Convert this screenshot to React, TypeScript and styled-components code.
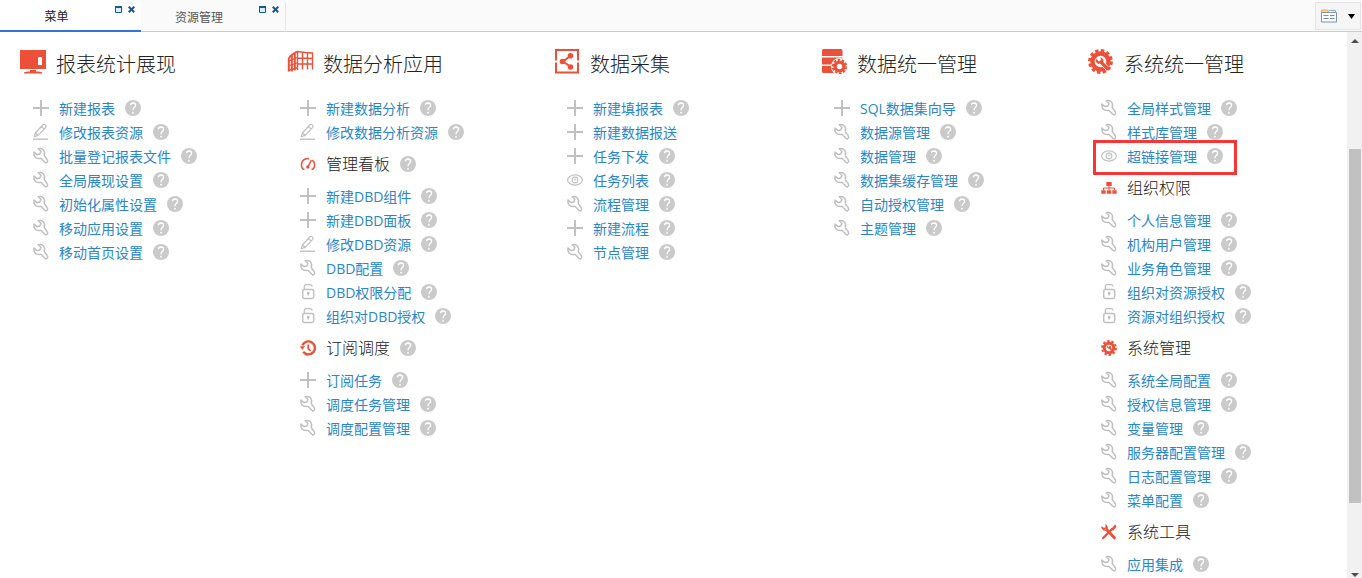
import React from 'react';
import styled, { createGlobalStyle } from 'styled-components';

const RED = '#ed5038';
const BLUE = '#2a86c8';
const GRAY = '#c0c0c0';

const GlobalStyle = createGlobalStyle`
  * { box-sizing: border-box; }
  body {
    margin: 0;
    background: #fff;
    color: #222;
    font-family: 'Open Sans', 'Noto Sans CJK SC', sans-serif;
  }
  button {
    margin: 0;
    padding: 0;
    border: 0;
    background: none;
    color: inherit;
    font: inherit;
    cursor: pointer;
  }
  svg { display: block; flex: none; }
`;

const Page = styled.div`
  display: flex;
  flex-direction: column;
  height: 100vh;
  overflow: hidden;
`;

const TabBar = styled.header`
  display: flex;
  flex: none;
  height: 32px;
  background: #fafafa;
  border-bottom: 1px solid #ccc;
`;

const Tab = styled.div<{ $active?: boolean }>`
  display: flex;
  width: ${(p) => (p.$active ? 141 : 145)}px;
  height: 32px;
  padding-right: 5px;
  border-right: ${(p) => (p.$active ? 0 : 1)}px solid #e6e6e6;
  border-bottom: ${(p) => (p.$active ? '2px solid #2f74d8' : '1px solid #ccc')};
  border-radius: 0 5px 0 0;
  background: ${(p) => (p.$active ? '#fff' : 'transparent')};
  color: ${(p) => (p.$active ? '#222' : '#555')};
`;

const TabLabel = styled.button`
  flex: 1;
  padding: 4px 2px 0 0;
  font-size: 12px;
  line-height: 26px;
`;

const TabControls = styled.div`
  display: flex;
  gap: 6px;
  padding-top: 6px;
  align-items: flex-start;
`;

const ViewButton = styled.button`
  display: flex;
  align-items: center;
  justify-content: space-between;
  width: 46px;
  height: 28px;
  margin: 2px 1px 0 auto;
  padding: 0 5px;
  border: 1px solid #e4e4e4;
  background: #f5f5f5;
`;

const Body = styled.div`
  display: flex;
  flex: 1;
  min-height: 0;
`;

const Columns = styled.main`
  display: grid;
  grid-template-columns: repeat(5, 1fr);
  flex: 1;
  padding-right: 12px;
  overflow: hidden;
`;

const Column = styled.section`
  padding-left: 20px;
  white-space: nowrap;
`;

const Title = styled.h2`
  display: flex;
  align-items: center;
  gap: 9px;
  height: 64px;
  margin: 0;
  padding-bottom: 5px;
  font-size: 20px;
  font-weight: 300;
  line-height: 28px;
`;

const TitleText = styled.span`
  padding-top: 6px;
`;

const SubTitle = styled.h3`
  display: flex;
  align-items: center;
  gap: 10px;
  height: 40px;
  margin: 0;
  padding-left: 13px;
  font-size: 16px;
  font-weight: 300;
  line-height: 24px;
`;

const List = styled.ul`
  margin: 0;
  padding: 0 0 0 13px;
  list-style: none;
`;

const Item = styled.li`
  display: flex;
`;

const ItemRow = styled.div`
  position: relative;
  display: flex;
  align-items: center;
  gap: 10px;
  height: 24px;
`;

const ItemLink = styled.a`
  padding-top: 2px;
  color: ${BLUE};
  font-size: 14px;
  line-height: 22px;
  text-decoration: none;
`;

const Callout = styled.span`
  position: absolute;
  inset: -4px -14px -7px -8px;
  border: 3px solid #fa3535;
  pointer-events: none;
`;

const ScrollTrack = styled.div`
  display: flex;
  flex-direction: column;
  flex: none;
  width: 15px;
  padding: 7px 1px 1px 2px;
  background: #f1f1f1;
`;

const ScrollArrow = styled.div<{ $down?: boolean }>`
  flex: none;
  width: 0;
  height: 4px;
  margin: 0 auto;
  border: 4px solid transparent;
  border-top: ${(p) => (p.$down ? '4px solid #505050' : '0')};
  border-bottom: ${(p) => (p.$down ? '0' : '4px solid #505050')};
`;

const ScrollSpace = styled.div<{ $grow: number }>`
  flex: ${(p) => p.$grow} 0 0;
`;

const ScrollThumb = styled.div`
  flex: 353 0 0;
  background: #c1c1c1;
`;

type IconName = 'plus' | 'edit' | 'tool' | 'eye' | 'lock';
type SubIconName = 'gauge' | 'history' | 'org' | 'gear' | 'tools';
type TitleIconName = 'monitor' | 'grid' | 'share' | 'database' | 'system';

const itemIcons: Record<IconName, React.ReactNode> = {
  plus: <path d="M8 0v16M0 8h16" strokeWidth="2" />,
  edit: (
    <>
      <path d="M1.200 12.800 2.400 9 9.600 1Q11-.2 12.300 .9 13.600 2 12.600 3.300L5.200 11.400ZM8.400 2.500l2.600 2.400M2.600 9l2.400 2.300" strokeWidth="1.200" />
      <path d="M0 15.200h15" strokeWidth="1.400" />
    </>
  ),
  tool: (
    <path
      d="M5.200.2C9-1 12.600 2 11.300 6.200Q11.100 6.900 11.600 7.400L14.200 11C15.600 13 13.400 15.200 11.800 13.700L8.200 10Q7.500 9.600 6.700 9.800C3 10.300.2 7.400 1 3.500L3.900 6 6.900 5.400 7.900 2.600Z"
      transform="translate(0 .6)"
      strokeWidth="1.500"
    />
  ),
  eye: (
    <>
      <ellipse cx="8" cy="8" rx="7.400" ry="5.100" strokeWidth="1.200" />
      <circle cx="8" cy="8" r="2.900" strokeWidth="1.100" />
      <circle cx="8" cy="7.600" r=".7" strokeWidth=".8" />
    </>
  ),
  lock: (
    <>
      <rect x="2.700" y="5.600" width="11" height="8.800" rx="1.600" strokeWidth="1.500" />
      <path d="M4.300 5.400V2.800Q4.300.6 6.500.6H9.600Q12 .6 12 2.600M8.200 9v2.600" />
      <circle cx="8.200" cy="9.300" r=".8" />
    </>
  ),
};

const ItemIcon = ({ name }: { name: IconName }) => (
  <svg width="16" height="16" viewBox="0 0 16 16" fill="none" stroke={GRAY} strokeWidth="1.300" strokeLinejoin="round" overflow="visible" aria-hidden="true">
    {itemIcons[name]}
  </svg>
);

const subIcons: Record<SubIconName, React.ReactNode> = {
  gauge: (
    <g fill="none" stroke={RED} strokeWidth="1.500">
      <path d="M4.500 13.200H3.300Q1.400 11.600 1.400 9 1.600 4.600 5.400 3 7.200 2.300 9 2.700M12.200 4.200Q14.800 6.200 14.700 9 14.600 11.700 12.800 13.200H11.500" />
      <path d="M11.300 4.200 8 11" />
      <circle cx="7.800" cy="11" r=".9" />
    </g>
  ),
  history: (
    <>
      <path d="M3.200 11.800A6.500 6.500 0 1 0 2.400 5.400M5.600 14.200l2.400.4" fill="none" stroke={RED} strokeWidth="2.400" />
      <path d="M0 6.200H5L2.200 10Z" fill={RED} />
      <path d="M8.200 4.500V8.600L10.600 10.800" fill="none" stroke={RED} strokeWidth="1.700" />
    </>
  ),
  org: (
    <g fill={RED}>
      <path d="M5.300 2h5.400v4H5.300ZM.3 10.200h4.400v3.600H.3ZM5.800 10.200h4.400v3.600H5.800ZM11.300 10.200h4.400v3.600h-4.400Z" />
      <path d="M8 6v4M2.500 10V8h11v2" fill="none" stroke={RED} />
    </g>
  ),
  gear: (
    <>
      <circle cx="8" cy="8" r="6.900" fill="none" stroke={RED} strokeWidth="2" strokeDasharray="2.400 1.940" />
      <circle cx="8" cy="8" r="4.700" fill="none" stroke={RED} strokeWidth="3" />
      <path d="M7.800 6.600 12 12" stroke={RED} strokeWidth="1.800" />
      <path d="M6 6.400 8 8.400M9 6.200l.8 2" stroke={RED} strokeWidth="1.200" />
    </>
  ),
  tools: (
    <g fill="none" stroke={RED} strokeLinecap="round">
      <path d="M2.200 14 11 5" strokeWidth="2.400" />
      <path d="M11 5.200 14 1.800 14.600 2.600 12 5.800Z" strokeWidth="1.500" />
      <path d="M6 6 13.400 13.800" strokeWidth="3" />
      <path d="M1.200 3.600Q2.200 6.800 5.400 6 7.200 4.400 5.200 1.600L5 4 3.200 4.600Z" strokeWidth="1.400" />
    </g>
  ),
};

const SubIcon = ({ name }: { name: SubIconName }) => (
  <svg width="16" height="16" viewBox="0 0 16 16" aria-hidden="true">
    {subIcons[name]}
  </svg>
);

const titleIcons: Record<TitleIconName, React.ReactNode> = {
  monitor: (
    <g fill={RED}>
      <path d="M0 1H26V20H0ZM18 8V16H22V8Z" fillRule="evenodd" />
      <path d="M10 21h6v1.500h2q4 0 4 1.500v.5H4V24Q4 22.500 8 22.500h2Z" />
    </g>
  ),
  grid: (
    <g fill="none" stroke={RED}>
      <path d="M10 2.500 18.500 3.500 25.500 4V20.500M10.500 2V21M15.500 3V20.500M20.500 3.500V20.500M10.500 9 26 9.500M10.500 15H26" strokeWidth="1.400" />
      <path d="M1.800 22.500V10Q2 7.500 4.500 6L10 2.500M4.800 22.500V6.500M7.800 21.500V4.500" strokeWidth="2" />
      <path d="M1 12.500 10 8.500M1 17 10 14M1 21.500 10 19" strokeWidth="1.300" />
    </g>
  ),
  share: (
    <g fill={RED}>
      <path d="M2 11.500V1H24V11.500M2 13.500V23.500H24V13.500" fill="none" stroke={RED} strokeWidth="2" />
      <path d="M17 6.500 9 12.500 17 18" fill="none" stroke={RED} strokeWidth="2" />
      <circle cx="16.500" cy="6.800" r="2.800" />
      <circle cx="8.500" cy="12.500" r="2.800" />
      <circle cx="16.500" cy="18" r="2.800" />
    </g>
  ),
  database: (
    <>
      <path d="M1 1.500Q1 0 2.500 0H20Q21.500 0 21.500 1.500V7H1ZM1 8.500H21.500V15.500H1ZM1 17H21.500V24H2.500Q1 24 1 22.500Z" fill={RED} />
      <circle cx="18.500" cy="17.500" r="8.500" fill="#fff" />
      <circle cx="18.500" cy="17.500" r="6.700" fill="none" stroke={RED} strokeWidth="2" strokeDasharray="2.600 1.610" />
      <circle cx="18.500" cy="17.500" r="4.400" fill="none" stroke={RED} strokeWidth="3.400" />
    </>
  ),
  system: (
    <>
      <circle cx="12.500" cy="12.500" r="11" fill="none" stroke={RED} strokeWidth="2.800" strokeDasharray="3.400 2.360" />
      <circle cx="12.500" cy="12.500" r="8" fill="none" stroke={RED} strokeWidth="4.400" />
      <path d="M12 12 20 20.500" stroke={RED} strokeWidth="3.400" />
      <path d="M8 9.500Q7 13.500 10.500 15 15.500 15.500 15.500 10.500L12.500 8 13 11.500 11 12.500Z" fill={RED} />
      <path d="M11.500 14.500 18 21M15.500 12 20 17.500" stroke="#fff" strokeWidth=".8" />
    </>
  ),
};

const TitleIcon = ({ name }: { name: TitleIconName }) => (
  <svg width="27" height="25" viewBox="0 0 27 25" aria-hidden="true">
    {titleIcons[name]}
  </svg>
);

const HelpButton = ({ topic }: { topic: string }) => (
  <button type="button" aria-label={`${topic}帮助`}>
    <svg width="16" height="16" viewBox="0 0 16 16" aria-hidden="true">
      <circle cx="8" cy="8" r="8" fill="#cacaca" />
      <path d="M5.400 5.300Q5.600 3 8 3 10.600 3.100 10.600 5.200 10.500 6.600 9.200 7.400 8 8.300 8 10.200" fill="none" stroke="#fff" strokeWidth="1.300" />
      <circle cx="8" cy="12.700" r=".9" fill="#fff" />
    </svg>
  </button>
);

const WindowControls = ({ tab }: { tab: string }) => (
  <TabControls>
    <button type="button" aria-label={`最大化${tab}`}>
      <svg width="7" height="8" viewBox="0 0 7 8" aria-hidden="true">
        <path d="M.5 1v5.500h6V1Z" fill="#d8ecfa" stroke="#155a96" />
        <path d="M0 1h7" stroke="#155a96" strokeWidth="2" />
      </svg>
    </button>
    <button type="button" aria-label={`关闭${tab}`}>
      <svg width="8" height="8" viewBox="0 0 8 8" aria-hidden="true">
        <path d="M.7.7l5.600 5.600M6.300.7.7 6.300" stroke="#155a96" strokeWidth="2" />
      </svg>
    </button>
  </TabControls>
);

interface Entry {
  icon: IconName;
  text: string;
  noHelp?: boolean;
  marked?: boolean;
}

interface Group {
  title?: string;
  icon?: SubIconName;
  help?: boolean;
  entries: Entry[];
}

interface Section {
  title: string;
  icon: TitleIconName;
  groups: Group[];
}

const entry = (icon: IconName, text: string, extra: Partial<Entry> = {}): Entry => ({ icon, text, ...extra });

const sections: Section[] = [
  {
    title: '报表统计展现',
    icon: 'monitor',
    groups: [
      {
        entries: [
          entry('plus', '新建报表'),
          entry('edit', '修改报表资源'),
          entry('tool', '批量登记报表文件'),
          entry('tool', '全局展现设置'),
          entry('tool', '初始化属性设置'),
          entry('tool', '移动应用设置'),
          entry('tool', '移动首页设置'),
        ],
      },
    ],
  },
  {
    title: '数据分析应用',
    icon: 'grid',
    groups: [
      { entries: [entry('plus', '新建数据分析'), entry('edit', '修改数据分析资源')] },
      {
        title: '管理看板',
        icon: 'gauge',
        help: true,
        entries: [
          entry('plus', '新建DBD组件'),
          entry('plus', '新建DBD面板'),
          entry('edit', '修改DBD资源'),
          entry('tool', 'DBD配置'),
          entry('lock', 'DBD权限分配'),
          entry('lock', '组织对DBD授权'),
        ],
      },
      {
        title: '订阅调度',
        icon: 'history',
        help: true,
        entries: [entry('plus', '订阅任务'), entry('tool', '调度任务管理'), entry('tool', '调度配置管理')],
      },
    ],
  },
  {
    title: '数据采集',
    icon: 'share',
    groups: [
      {
        entries: [
          entry('plus', '新建填报表'),
          entry('plus', '新建数据报送', { noHelp: true }),
          entry('plus', '任务下发'),
          entry('eye', '任务列表'),
          entry('tool', '流程管理'),
          entry('plus', '新建流程'),
          entry('tool', '节点管理'),
        ],
      },
    ],
  },
  {
    title: '数据统一管理',
    icon: 'database',
    groups: [
      {
        entries: [
          entry('plus', 'SQL数据集向导'),
          entry('tool', '数据源管理'),
          entry('tool', '数据管理'),
          entry('tool', '数据集缓存管理'),
          entry('tool', '自动授权管理'),
          entry('tool', '主题管理'),
        ],
      },
    ],
  },
  {
    title: '系统统一管理',
    icon: 'system',
    groups: [
      {
        entries: [
          entry('tool', '全局样式管理'),
          entry('tool', '样式库管理'),
          entry('eye', '超链接管理', { marked: true }),
        ],
      },
      {
        title: '组织权限',
        icon: 'org',
        entries: [
          entry('tool', '个人信息管理'),
          entry('tool', '机构用户管理'),
          entry('tool', '业务角色管理'),
          entry('lock', '组织对资源授权'),
          entry('lock', '资源对组织授权'),
        ],
      },
      {
        title: '系统管理',
        icon: 'gear',
        entries: [
          entry('tool', '系统全局配置'),
          entry('tool', '授权信息管理'),
          entry('tool', '变量管理'),
          entry('tool', '服务器配置管理'),
          entry('tool', '日志配置管理'),
          entry('tool', '菜单配置'),
        ],
      },
      { title: '系统工具', icon: 'tools', entries: [entry('tool', '应用集成')] },
    ],
  },
];

const MenuGroup = ({ group }: { group: Group }) => (
  <>
    {group.title && group.icon && (
      <SubTitle>
        <SubIcon name={group.icon} />
        <span>{group.title}</span>
        {group.help && <HelpButton topic={group.title} />}
      </SubTitle>
    )}
    <List>
      {group.entries.map((e) => (
        <Item key={e.text}>
          <ItemRow>
            <ItemIcon name={e.icon} />
            <ItemLink href="#">{e.text}</ItemLink>
            {!e.noHelp && <HelpButton topic={e.text} />}
            {e.marked && <Callout />}
          </ItemRow>
        </Item>
      ))}
    </List>
  </>
);

export default function App() {
  return (
    <Page>
      <GlobalStyle />
      <TabBar>
        <Tab $active>
          <TabLabel type="button">菜单</TabLabel>
          <WindowControls tab="菜单" />
        </Tab>
        <Tab>
          <TabLabel type="button">资源管理</TabLabel>
          <WindowControls tab="资源管理" />
        </Tab>
        <ViewButton type="button" aria-label="切换视图">
          <svg width="16" height="14" viewBox="0 0 16 14" aria-hidden="true">
            <path d="M.5 3.500h15v9.500H.5Z" fill="#fff" stroke="#7e93a8" />
            <path d="M.5 3V1h6l1 2" fill="#ffd873" stroke="#f0b13c" />
            <path d="M7.500 1.500h7v2" fill="none" stroke="#8fb0b8" />
            <path d="M2.500 6.500h5M9 6.500h4.500M2.500 9.500h5M9 9.500h4.500" stroke="#6f8fc0" />
          </svg>
          <svg width="7" height="5" viewBox="0 0 7 5" aria-hidden="true">
            <path d="M0 0h7L3.500 5Z" fill="#000" />
          </svg>
        </ViewButton>
      </TabBar>
      <Body>
        <Columns>
          {sections.map((s) => (
            <Column key={s.title}>
              <Title>
                <TitleIcon name={s.icon} />
                <TitleText>{s.title}</TitleText>
              </Title>
              {s.groups.map((g, i) => (
                <MenuGroup key={g.title ?? i} group={g} />
              ))}
            </Column>
          ))}
        </Columns>
        <ScrollTrack aria-hidden="true">
          <ScrollArrow />
          <ScrollSpace $grow={106} />
          <ScrollThumb />
          <ScrollSpace $grow={70} />
          <ScrollArrow $down />
        </ScrollTrack>
      </Body>
    </Page>
  );
}
